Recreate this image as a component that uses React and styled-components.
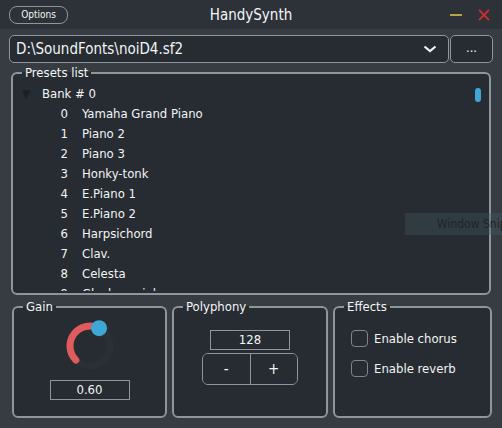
import styled, { createGlobalStyle } from "styled-components";

const GlobalStyle = createGlobalStyle`
  html, body {
    margin: 0;
    padding: 0;
    background: #363c42;
  }
  * { box-sizing: border-box; }
`

const Window = styled.div`
  position: relative;
  width: 502px;
  height: 428px;
  display: flex;
  flex-direction: column;
  background: #363c42;
  color: #f2f4f5;
  font-family: "DejaVu Sans Condensed", "DejaVu Sans", sans-serif;
  font-size: 13px;
  overflow: hidden;
`

const TitleBar = styled.div`
  height: 29px;
  display: grid;
  grid-template-columns: 1fr auto 1fr;
  align-items: center;
  padding: 0 9px;
  background: #2c3237;
`

const OptionsButton = styled.button`
  justify-self: start;
  width: 59px;
  height: 18px;
  padding: 0;
  border: 1.5px solid #8e959b;
  border-radius: 8px;
  background: #2c3237;
  color: #f2f4f5;
  font-family: inherit;
  font-size: 10px;
  line-height: 14px;
`

const Title = styled.div`
  font-size: 15px;
  color: #f4f6f7;
`

const WindowControls = styled.div`
  justify-self: end;
  display: flex;
  align-items: center;
  gap: 16px;
  padding-right: 3px;
`

const Content = styled.div`
  flex: 1;
  display: flex;
  flex-direction: column;
  padding: 6px 9px 0 9px;
`

const FileRow = styled.div`
  display: flex;
  height: 28px;
`

const Combo = styled.div`
  flex: 1;
  display: flex;
  align-items: center;
  justify-content: space-between;
  padding: 0 11px 0 6px;
  border: 1.5px solid #8e959b;
  border-radius: 5px;
  background: #262c31;
  font-size: 15px;
`

const BrowseButton = styled.button`
  width: 43px;
  margin-left: 1px;
  border: 1.5px solid #8e959b;
  border-radius: 5px;
  background: #262c31;
  color: #f2f4f5;
  font-family: inherit;
  font-size: 13px;
  padding: 0 0 4px 0;
`

const Group = styled.fieldset`
  margin: 0;
  padding: 0;
  min-width: 0;
  height: ${p => p.$height}px;
  border: 2px solid #8e959b;
  border-radius: 6px;
  background: #262c31;
  position: relative;
`

const Legend = styled.legend`
  margin-left: 9px;
  padding: 0 3px;
  font-size: 13px;
  line-height: 16px;
  color: #f4f6f7;
`

const PresetsGroup = styled(Group)`
  margin: 2px 2px 0 2px;
`

const Tree = styled.div`
  height: 210px;
  overflow: hidden;
  padding-top: 2px;
`

const BankRow = styled.div`
  height: 20px;
  display: flex;
  align-items: center;
  padding-left: 9px;
`

const Arrow = styled.span`
  width: 20px;
  font-size: 12px;
  color: #1b2024;
  padding-top: 1px;
`

const PresetRow = styled.div`
  height: 20px;
  display: grid;
  grid-template-columns: 55px 14px 1fr;
  align-items: center;
`

const PresetNum = styled.span`
  grid-column: 1;
  text-align: right;
`

const PresetName = styled.span`
  grid-column: 3;
`

const ScrollHandle = styled.div`
  position: absolute;
  right: 8px;
  top: 7px;
  width: 6px;
  height: 14px;
  border-radius: 3px;
  background: #3fa7d8;
`

const BottomRow = styled.div`
  display: grid;
  grid-template-columns: 155px 156px 159px;
  gap: 5px;
  margin: 4px 0 0 3px;
  width: 480px;
`

const GroupBody = styled.div`
  display: flex;
  flex-direction: column;
  align-items: ${p => p.$align || "center"};
  padding: ${p => p.$pad || "0"};
  gap: ${p => p.$gap || 0}px;
`

const ValueBox = styled.div`
  width: 80px;
  height: 20px;
  border: 1px solid #8e959b;
  background: #262c31;
  text-align: center;
  line-height: 18px;
  font-size: 13px;
`

const Stepper = styled.div`
  display: flex;
  width: 96px;
  height: 32px;
  border: 1.5px solid #8e959b;
  border-radius: 6px;
  overflow: hidden;
`

const StepButton = styled.button`
  flex: 1;
  border: none;
  border-left: ${p => (p.$divider ? "1.5px solid #8e959b" : "none")};
  background: #262c31;
  color: #f2f4f5;
  font-family: inherit;
  font-size: 15px;
  padding: 0;
`

const CheckRow = styled.label`
  display: flex;
  align-items: center;
  gap: 6px;
  height: 18px;
`

const CheckBox = styled.span`
  width: 17px;
  height: 17px;
  border: 1.5px solid #7d848a;
  border-radius: 4px;
`

const SnipHint = styled.div`
  position: absolute;
  left: 405px;
  top: 213px;
  width: 110px;
  height: 22px;
  padding-left: 32px;
  background: rgba(70, 88, 100, 0.35);
  color: #1f2428;
  font-size: 12px;
  line-height: 22px;
  white-space: nowrap;
`

const presets = [
  "Yamaha Grand Piano",
  "Piano 2",
  "Piano 3",
  "Honky-tonk",
  "E.Piano 1",
  "E.Piano 2",
  "Harpsichord",
  "Clav.",
  "Celesta",
  "Glockenspiel",
]

function Knob({ value }) {
  const r = 20
  const cx = 26
  const cy = 26
  const start = -135
  const end = start + value * 270
  const pt = a => {
    const rad = (a * Math.PI) / 180
    return [cx + r * Math.sin(rad), cy - r * Math.cos(rad)]
  }
  const [sx, sy] = pt(start)
  const [ex, ey] = pt(end)
  const large = end - start > 180 ? 1 : 0
  return (
    <svg width="52" height="52" viewBox="0 0 52 52">
      <circle cx={cx} cy={cy} r={r} fill="none" stroke="#2a3035" strokeWidth="7" />
      <path
        d={`M ${sx} ${sy} A ${r} ${r} 0 ${large} 1 ${ex} ${ey}`}
        fill="none"
        stroke="#e05b5b"
        strokeWidth="7"
        strokeLinecap="round"
      />
      <circle cx={ex} cy={ey} r="8" fill="#3fa7d8" />
    </svg>
  )
}

export default function App() {
  return (
    <Window>
      <GlobalStyle />
      <TitleBar>
        <OptionsButton>Options</OptionsButton>
        <Title>HandySynth</Title>
        <WindowControls>
          <svg width="12" height="4" viewBox="0 0 12 4">
            <rect x="0" y="1" width="12" height="2" fill="#b7a43c" />
          </svg>
          <svg width="12" height="12" viewBox="0 0 12 12">
            <path d="M1 1 L11 11 M11 1 L1 11" stroke="#c2302f" strokeWidth="1.8" />
          </svg>
        </WindowControls>
      </TitleBar>
      <Content>
        <FileRow>
          <Combo>
            <span>D:\SoundFonts\noiD4.sf2</span>
            <svg width="14" height="8" viewBox="0 0 14 8">
              <polyline points="1.5,1.5 7,6 12.5,1.5" fill="none" stroke="#f2f4f5" strokeWidth="2.2" />
            </svg>
          </Combo>
          <BrowseButton>...</BrowseButton>
        </FileRow>
        <PresetsGroup $height={230}>
          <Legend>Presets list</Legend>
          <Tree>
            <BankRow>
              <Arrow>▼</Arrow>
              <span>Bank # 0</span>
            </BankRow>
            {presets.map((name, i) => (
              <PresetRow key={name}>
                <PresetNum>{i}</PresetNum>
                <PresetName>{name}</PresetName>
              </PresetRow>
            ))}
          </Tree>
          <ScrollHandle />
        </PresetsGroup>
        <BottomRow>
          <Group $height={119}>
            <Legend>Gain</Legend>
            <GroupBody $pad="5px 0 0 0" $gap={8}>
              <Knob value={0.6} />
              <ValueBox>0.60</ValueBox>
            </GroupBody>
          </Group>
          <Group $height={119}>
            <Legend>Polyphony</Legend>
            <GroupBody $pad="15px 0 0 0" $gap={3}>
              <ValueBox>128</ValueBox>
              <Stepper>
                <StepButton>-</StepButton>
                <StepButton $divider>+</StepButton>
              </Stepper>
            </GroupBody>
          </Group>
          <Group $height={119}>
            <Legend>Effects</Legend>
            <GroupBody $align="flex-start" $pad="14px 0 0 16px" $gap={12}>
              <CheckRow>
                <CheckBox />
                Enable chorus
              </CheckRow>
              <CheckRow>
                <CheckBox />
                Enable reverb
              </CheckRow>
            </GroupBody>
          </Group>
        </BottomRow>
      </Content>
      <SnipHint>Window Snip</SnipHint>
    </Window>
  )
}
